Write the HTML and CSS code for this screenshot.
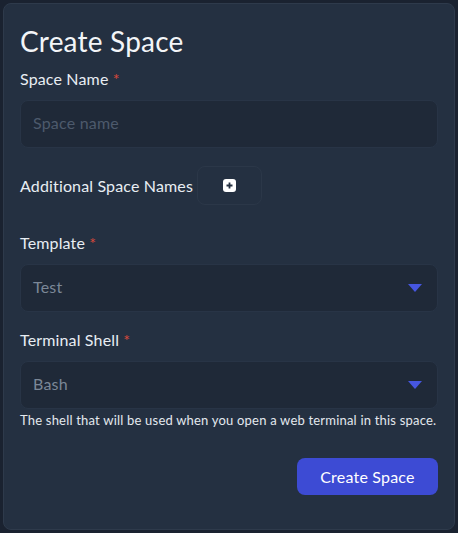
FILE: index.html
```html
<!DOCTYPE html>
<html>
<head>
<meta charset="utf-8">
<link rel="stylesheet" href="styles.css">
</head>
<body>
<div class="card">
  <h1 class="title">Create Space</h1>
  <div class="field">
    <label class="label">Space Name <span class="req">*</span></label>
    <div class="input placeholder">Space name</div>
  </div>
  <div class="extra">
    <span class="label">Additional Space Names</span>
    <div class="add-btn">
      <svg width="13" height="13" viewBox="0 0 13 13"><rect x="0" y="0" width="13" height="13" rx="3" fill="#ffffff"/><path d="M6.5 3.5v6M3.5 6.5h6" stroke="#243041" stroke-width="1.8"/></svg>
    </div>
  </div>
  <div class="field">
    <label class="label">Template <span class="req">*</span></label>
    <div class="input select"><span class="value">Test</span><span class="caret"></span></div>
  </div>
  <div class="field">
    <label class="label">Terminal Shell <span class="req">*</span></label>
    <div class="input select"><span class="value">Bash</span><span class="caret"></span></div>
    <div class="help">The shell that will be used when you open a web terminal in this space.</div>
  </div>
  <div class="actions">
    <button class="submit">Create Space</button>
  </div>
</div>
</body>
</html>
```
FILE: styles.css
```css
html, body {
  margin: 0;
  padding: 0;
  background: #1a2230;
}
body {
  padding: 3px;
  font-family: "Lato", "Noto Sans", sans-serif;
  color: #e8edf3;
}
.card {
  width: 452px;
  height: 527px;
  box-sizing: border-box;
  background: #243041;
  border: 1px solid #2e3a4b;
  border-radius: 8px;
  padding: 20px 16px 0 16px;
}
.title {
  margin: 0;
  font-size: 28px;
  font-weight: 400;
  line-height: 34px;
  color: #f3f5f8;
  letter-spacing: 0.2px;
}
.field {
  margin-top: 10px;
}
.label {
  display: block;
  font-size: 16px;
  line-height: 22px;
  color: #e8edf3;
  letter-spacing: 0.15px;
}
.req {
  color: #d9483b;
}
.input {
  margin-top: 10px;
  height: 48px;
  box-sizing: border-box;
  background: #1f2938;
  border: 1px solid #283446;
  border-radius: 8px;
  padding: 0 12px 3px 12px;
  display: flex;
  align-items: center;
  font-size: 16px;
  letter-spacing: 0.2px;
}
.placeholder {
  color: #4d5a6c;
}
.select {
  justify-content: space-between;
  color: #7b8797;
  padding-right: 15px;
  padding-bottom: 1px;
}
.value {
  padding-bottom: 2px;
}
.caret {
  width: 0;
  height: 0;
  border-left: 7.5px solid transparent;
  border-right: 7.5px solid transparent;
  border-top: 8px solid #4656e0;
}
.extra {
  display: flex;
  align-items: center;
  gap: 4px;
  margin-top: 18px;
}
.extra .label {
  display: inline;
}
.add-btn {
  width: 65px;
  height: 39px;
  box-sizing: border-box;
  border: 1px solid #2b3748;
  border-radius: 8px;
  display: flex;
  align-items: center;
  justify-content: center;
}
.add-btn svg {
  display: block;
}
.extra + .field {
  margin-top: 27px;
}
.field + .field {
  margin-top: 17px;
}
.help {
  margin-top: 2px;
  font-size: 13px;
  line-height: 18px;
  color: #e3e8ee;
  letter-spacing: 0.2px;
}
.actions {
  display: flex;
  justify-content: flex-end;
  margin-top: 29px;
}
.submit {
  width: 141px;
  height: 37px;
  background: #3d4bd4;
  color: #ffffff;
  border: none;
  border-radius: 8px;
  font-family: inherit;
  font-size: 16px;
  letter-spacing: 0.2px;
  padding: 0;
}
```
